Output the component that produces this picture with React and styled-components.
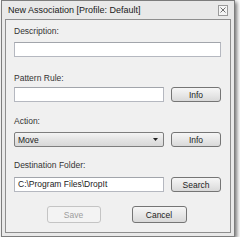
import React from 'react';
import styled, { createGlobalStyle } from 'styled-components';

const GlobalStyle = createGlobalStyle`
  html, body {
    margin: 0;
    padding: 0;
    background: #ffffff;
  }
  body {
    font-family: "Liberation Sans", Arial, sans-serif;
    font-size: 8.5px;
    color: #1e1e1e;
  }
`;

const StyledWindow = styled.div`
  box-sizing: border-box;
  margin-left: 1px;
  width: 234px;
  height: 237px;
  border: 1px solid #7d7d7d;
  background: #e9e9e9;
  box-shadow: 2px 2px 4px rgba(0, 0, 0, 0.55);
  display: flex;
  flex-direction: column;
  padding: 0 3px 3px 3px;
`;

const StyledTitleBar = styled.div`
  height: 18px;
  display: flex;
  align-items: center;
  justify-content: space-between;
  padding-left: 3px;
  padding-right: 3px;

  span {
    font-size: 9px;
    color: #202020;
  }
`;

const StyledClose = styled.div`
  box-sizing: border-box;
  width: 10px;
  height: 11px;
  border: 1px solid #9a9a9a;
  background: #f4f4f4;
  display: flex;
  align-items: center;
  justify-content: center;
`;

const StyledClient = styled.div`
  flex: 1;
  box-sizing: border-box;
  border: 1px solid #8e8e8e;
  background: #f0f0f0;
  padding: 6px 9px 0 8px;
  display: flex;
  flex-direction: column;
`;

const StyledLabel = styled.div`
  height: 11px;
  line-height: 11px;
  margin-top: ${(p) => p.$top || 0}px;
  color: #333;
`;

const StyledRow = styled.div`
  display: flex;
  gap: 7px;
  margin-top: ${(p) => p.$top || 0}px;
  height: 15px;
`;

const StyledInput = styled.div`
  box-sizing: border-box;
  flex: 1;
  height: 15px;
  background: #ffffff;
  border: 1px solid #b5b8c0;
  border-top-color: #a2a5ab;
  padding-left: 3px;
  line-height: 13px;
  color: #222;
`;

const StyledSelect = styled.div`
  box-sizing: border-box;
  flex: 1;
  height: 15px;
  border: 1px solid #7e7e7e;
  border-radius: 2px;
  background: linear-gradient(#f4f4f4, #e4e4e4 50%, #d8d8d8);
  display: flex;
  align-items: center;
  justify-content: space-between;
  padding: 0 5px 0 3px;
  color: #222;
`;

const StyledButton = styled.div`
  box-sizing: border-box;
  width: ${(p) => p.$width || 50}px;
  height: ${(p) => p.$height || 15}px;
  border: 1px solid ${(p) => (p.$disabled ? '#c4c4c4' : '#757575')};
  border-radius: 3px;
  background: ${(p) =>
    p.$disabled ? '#f3f3f3' : 'linear-gradient(#f6f6f6, #e8e8e8 50%, #d9d9d9)'};
  color: ${(p) => (p.$disabled ? '#9d9d9d' : '#222')};
  display: flex;
  align-items: center;
  justify-content: center;
`;

const StyledFooter = styled.div`
  display: flex;
  justify-content: center;
  gap: 31px;
  margin-top: 14px;
  padding-right: 2px;
`;

const App = () => {
  return (
    <>
      <GlobalStyle />
      <StyledWindow>
        <StyledTitleBar>
          <span>New Association [Profile: Default]</span>
          <StyledClose>
            <svg width="6" height="6" viewBox="0 0 6 6">
              <path d="M0.5 0.5 L5.5 5.5 M5.5 0.5 L0.5 5.5" stroke="#707070" strokeWidth="1" />
            </svg>
          </StyledClose>
        </StyledTitleBar>
        <StyledClient>
          <StyledLabel>Description:</StyledLabel>
          <StyledRow $top={5}>
            <StyledInput />
          </StyledRow>

          <StyledLabel $top={16}>Pattern Rule:</StyledLabel>
          <StyledRow $top={3}>
            <StyledInput />
            <StyledButton>Info</StyledButton>
          </StyledRow>

          <StyledLabel $top={14}>Action:</StyledLabel>
          <StyledRow $top={5}>
            <StyledSelect>
              <span>Move</span>
              <svg width="5" height="3" viewBox="0 0 5 3">
                <path d="M0 0 L5 0 L2.5 3 Z" fill="#222" />
              </svg>
            </StyledSelect>
            <StyledButton>Info</StyledButton>
          </StyledRow>

          <StyledLabel $top={13}>Destination Folder:</StyledLabel>
          <StyledRow $top={6}>
            <StyledInput>C:\Program Files\DropIt</StyledInput>
            <StyledButton>Search</StyledButton>
          </StyledRow>

          <StyledFooter>
            <StyledButton $disabled $width={54} $height={17}>Save</StyledButton>
            <StyledButton $width={55} $height={17}>Cancel</StyledButton>
          </StyledFooter>
        </StyledClient>
      </StyledWindow>
    </>
  );
};

export default App;
